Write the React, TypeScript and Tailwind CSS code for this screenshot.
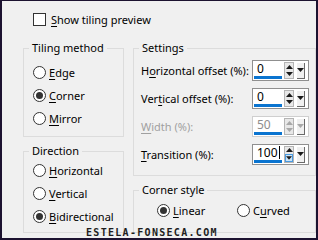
import type { ReactNode } from "react";

const font = { fontFamily: '"Noto Sans", "Segoe UI", sans-serif' };

const Key = ({ children }: { children: ReactNode }) => (
  <span className="underline decoration-1 underline-offset-2">{children}</span>
);

const Radio = ({ checked, label }: { checked?: boolean; label: ReactNode }) => (
  <div className="flex h-[23px] items-center gap-[3px]">
    <span className="flex h-[13px] w-[13px] shrink-0 items-center justify-center rounded-full border border-[#333] bg-white">
      {checked && <span className="h-[7px] w-[7px] rounded-full bg-[#333]" />}
    </span>
    <span>{label}</span>
  </div>
);

const Group = ({
  title,
  className,
  children,
}: {
  title: string;
  className?: string;
  children: ReactNode;
}) => (
  <fieldset className="border border-[#dcdcdc]">
    <legend className="ml-[5px] px-[3px] leading-[16px]">{title}</legend>
    <div className={className}>{children}</div>
  </fieldset>
);

const Arrow = ({ dir, dim }: { dir: "up" | "down"; dim?: boolean }) => (
  <svg width="7" height="4" viewBox="0 0 7 4">
    <path
      d={dir === "up" ? "M3.5 0 L7 4 L0 4 Z" : "M0 0 L7 0 L3.5 4 Z"}
      fill={dim ? "#a8a8a8" : "#1a1a1a"}
    />
  </svg>
);

const SpinField = ({
  value,
  disabled,
  focused,
}: {
  value: string;
  disabled?: boolean;
  focused?: boolean;
}) => (
  <div
    className={`flex h-[21px] w-[57px] shrink-0 items-center border bg-white pl-[1px] ${
      disabled ? "border-[#cfcfcf]" : "border-[#8f8f8f]"
    }`}
  >
    <div className="flex h-full w-[28px] flex-col">
      <div
        className={`flex flex-1 items-center pl-[3px] text-[12px] ${
          disabled ? "text-[#8d8d8d]" : "text-black"
        }`}
      >
        {value}
        {focused && <span className="ml-[1px] h-[13px] w-px bg-black" />}
      </div>
      <div className="mb-[1px] h-[3px] w-[28px] bg-[#0a74d0]" />
    </div>
    <div className="ml-[2px] flex h-[17px] w-[10px] flex-col border border-[#b4b4b4] bg-[#e8e8e8]">
      <div className="flex flex-1 items-center justify-center">
        <Arrow dir="up" dim={disabled} />
      </div>
      <div
        className={`flex flex-1 items-center justify-center ${
          focused ? "border border-[#4a9ae0] bg-[#cce4f7]" : ""
        }`}
      >
        <Arrow dir="down" dim={disabled} />
      </div>
    </div>
    <div className="ml-[3px] flex h-[16px] w-[8px] items-center justify-center border-r border-b border-[#6a6a6a] bg-[#f0f0f0]">
      <Arrow dir="down" dim={disabled} />
    </div>
  </div>
);

const Row = ({ label, children, dim }: { label: ReactNode; children: ReactNode; dim?: boolean }) => (
  <div className={`flex h-[21px] items-center justify-between pr-[6px] ${dim ? "text-[#a0a0a0]" : ""}`}>
    <span className="whitespace-nowrap">{label}</span>
    {children}
  </div>
);

export default function App() {
  return (
    <div
      className="relative h-[240px] w-[318px] border-t border-r-2 border-b-2 border-l-2 border-[#1c1230] bg-[#f0f0f0] text-[11px] leading-[15px] text-black"
      style={font}
    >
      <div className="flex items-center gap-[5px] pt-[11px] pl-[31px]">
        <span className="h-[13px] w-[13px] border border-[#333] bg-white" />
        <span>
          <Key>S</Key>how tiling preview
        </span>
      </div>

      <div className="mt-[13px] flex gap-[9px] pl-[21px]">
        <div className="flex w-[101px] flex-col gap-[6px]">
          <Group title="Tiling method" className="pt-[5px] pb-[6px] pl-[9px]">
            <Radio label={<><Key>E</Key>dge</>} />
            <Radio checked label={<><Key>C</Key>orner</>} />
            <Radio label={<><Key>M</Key>irror</>} />
          </Group>
          <Group title="Direction" className="pb-[4px] pl-[9px]">
            <Radio label={<><Key>H</Key>orizontal</>} />
            <Radio label={<><Key>V</Key>ertical</>} />
            <Radio checked label={<><Key>B</Key>idirectional</>} />
          </Group>
        </div>

        <div className="flex w-[183px] flex-col gap-[6px]">
          <Group title="Settings" className="flex flex-col gap-[7px] pt-[4px] pb-[10px] pl-[7px]">
            <Row label={<>H<Key>o</Key>rizontal offset (%):</>}>
              <SpinField value="0" />
            </Row>
            <Row label={<>Ver<Key>t</Key>ical offset (%):</>}>
              <SpinField value="0" />
            </Row>
            <Row dim label={<><Key>W</Key>idth (%):</>}>
              <SpinField value="50" disabled />
            </Row>
            <Row label={<><Key>T</Key>ransition (%):</>}>
              <SpinField value="100" focused />
            </Row>
          </Group>
          <Group title="Corner style" className="flex pt-[1px] pb-[10px] pl-[23px]">
            <div className="w-[80px]">
              <Radio checked label={<><Key>L</Key>inear</>} />
            </div>
            <Radio label={<>C<Key>u</Key>rved</>} />
          </Group>
        </div>
      </div>

      <div
        className="absolute top-[224px] left-[84px] text-[10px] font-bold tracking-[1.3px] text-[#1e1e1e]"
        style={{ fontFamily: '"DejaVu Sans Mono", monospace' }}
      >
        ESTELA-FONSECA.COM
      </div>
    </div>
  );
}
